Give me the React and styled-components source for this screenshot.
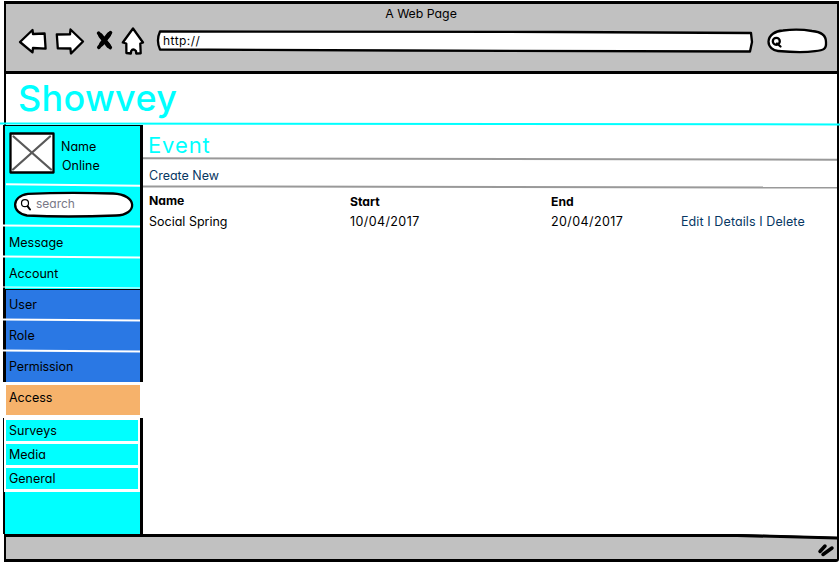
import React from "react";
import styled, { createGlobalStyle, css } from "styled-components";

const Global = createGlobalStyle`
  *, *::before, *::after { box-sizing: border-box; }
  body { margin: 0; background: #fff; overflow: hidden; }
`;

const Page = styled.div`
  width: 840px;
  height: 563px;
  padding: 1px 1px 0 4px;
  background: #fff;
  color: #000;
  font-family: Inter, "Liberation Sans", sans-serif;
  font-feature-settings: "cv11", "ss03";
  font-size: 12.5px;
  line-height: 16px;
  white-space: nowrap;
`;

const Window = styled.div`
  display: flex;
  flex-direction: column;
  width: 835px;
  height: 561px;
  border: solid #000;
  border-width: 3px 2px 3px 2px;
  border-bottom-right-radius: 3px;
`;

const Chrome = styled.header`
  height: 70px;
  flex: none;
  background: #c1c1c1;
  border-bottom: 3px solid #000;
`;

const Title = styled.div`
  height: 23px;
  padding-top: 2px;
  padding-right: 1px;
  text-align: center;
  font-size: 12.3px;
`;

const Toolbar = styled.div`
  display: flex;
  align-items: flex-start;
  height: 34px;
  padding-left: 10px;
`;

const Drawing = styled.svg`
  display: block;
  flex: none;
  overflow: visible;
  fill: #fff;
  stroke: #000;
  stroke-width: 2.3;
  stroke-linejoin: round;
  stroke-linecap: round;
`;

const Field = styled.div`
  position: relative;
  flex: none;
  display: flex;
  align-items: center;
  width: ${(p) => p.$w}px;
  height: ${(p) => p.$h}px;
  margin: ${(p) => p.$margin};
  > svg:first-child { position: absolute; inset: 0; }
`;

const FieldText = styled.span`
  position: relative;
  padding-left: ${(p) => p.$indent}px;
  padding-bottom: ${(p) => p.$lift || 0}px;
  color: ${(p) => p.$color || "#000"};
  font-size: 12px;
  letter-spacing: ${(p) => p.$ls || 0}px;
`;

const Brand = styled.h1`
  flex: none;
  height: 49px;
  margin: 0;
  padding-left: 12px;
  color: #00ffff;
  font-size: 36px;
  line-height: 48px;
  font-weight: 500;
  letter-spacing: 0.3px;
`;

const BrandRule = styled.div`
  position: relative;
  z-index: 1;
  flex: none;
  height: 2px;
  margin: 0 -3px 0 -6px;
  background: #00ffff;
  transform: skewY(0.06deg);
`;

const Body = styled.div`
  display: flex;
  flex: none;
  height: 409px;
  margin-left: -3px;
`;

const Sidebar = styled.aside`
  width: 140px;
  flex: none;
  display: flex;
  flex-direction: column;
`;

const edge = css`
  border: solid #000;
  border-width: 0 3px 0 2px;
`;

const Section = styled.div`
  ${edge}
  width: 140px;
  height: ${(p) => p.$h}px;
  flex: none;
  background: ${(p) => p.$bg || "#00ffff"};
  border-top-width: ${(p) => (p.$top ? 1 : 0)}px;
  border-left-width: ${(p) => p.$left || 2}px;
`;

const Profile = styled.div`
  display: flex;
  height: 58px;
  padding: 6px 0 0 4px;
`;

const ProfileText = styled.div`
  padding: 5px 0 0 6px;
  line-height: 19px;
  div + div { padding-left: 1px; }
`;

const Rule = styled.div`
  flex: none;
  height: ${(p) => p.$h || 2}px;
  margin-left: ${(p) => p.$bleed || 0}px;
  background: ${(p) => p.$color || "#fff"};
  transform: skewY(${(p) => p.$tilt || 0.5}deg);
`;

const Item = styled.div`
  height: 29px;
  padding: ${(p) => p.$drop || 8}px 0 0 ${(p) => p.$pad || 4}px;
  letter-spacing: ${(p) => p.$ls || 0}px;
`;

const Access = styled.div`
  width: 139px;
  height: 36px;
  flex: none;
  padding: 5px 0 0 3px;
  border: solid #fff;
  border-width: 3px 2px 3px 3px;
  background: #f6b26b;
  background-clip: padding-box;
`;

const SubMenu = styled.div`
  display: flex;
  flex-direction: column;
  gap: 3px;
  flex: none;
  width: 136px;
  height: 74px;
  padding: 2px 2px 3px 2px;
  margin-left: -1px;
  background: #fff;
`;

const SubItem = styled.div`
  flex: 1;
  padding: 2px 0 0 3px;
  line-height: 17px;
  background: #00ffff;
`;

const Main = styled.main`
  flex: 1;
  min-width: 0;
`;

const Heading = styled.h2`
  margin: 0;
  height: 33px;
  padding: 1px 0 0 5px;
  color: #00ffff;
  font-size: 22px;
  line-height: 38px;
  font-weight: 400;
  letter-spacing: 0.9px;
`;

const Create = styled.div`
  height: 26px;
  padding: 8px 0 0 6px;
  color: #073763;
`;

const Table = styled.div`
  display: grid;
  grid-template-columns: 201px 201px 130px 150px;
  grid-template-rows: 21px 20px;
  padding: 4px 0 0 6px;
  line-height: 19px;
`;

const Head = styled.div`
  font-weight: 700;
  font-size: 12.2px;
  padding-top: ${(p) => p.$drop || 0}px;
`;

const Cell = styled.div`
  color: ${(p) => (p.$link ? "#073763" : "#000")};
  letter-spacing: ${(p) => p.$ls || 0}px;
`;

const Footer = styled.footer`
  position: relative;
  display: flex;
  justify-content: flex-end;
  flex: 1;
  padding: 6px 3px 0 0;
  border-top: 3px solid #000;
  background: #c1c1c1;
  &::before, &::after {
    content: "";
    position: absolute;
    right: 0;
    top: -3px;
    width: 100px;
    height: 6px;
  }
  &::before {
    background: #fff;
    clip-path: polygon(0 0, 100% 0, 100% 3px);
  }
  &::after {
    background: #000;
    clip-path: polygon(0 0, 100% 2.4px, 100% 5.4px, 0 3px);
  }
`;

const Lens = () => (
  <Drawing width="13" height="14">
    <circle cx="5" cy="5.2" r="3.5" strokeWidth="1.2" />
    <path d="M7.5 8.2 10 11.5" strokeWidth="2" />
  </Drawing>
);

const menu = ["Message", "Account"];
const admin = [["User", 0], ["Role", 0], ["Permission", -0.1]];

export default function App() {
  return (
    <Page>
      <Global />
      <Window>
        <Chrome>
          <Title>A Web Page</Title>
          <Toolbar>
            <Drawing width="133" height="30" viewBox="16 22.5 133 30">
              <path d="M20 37.5 32.5 25.5 33 29.5 44.6 29 45.6 44.2 33 43.5 32.5 47.8Z" />
              <path d="M56.8 30 70 29.8 70.5 25 83 37 71 49 70.4 44 57.8 43.8Z" />
              <path d="M98.6 28.7 110.3 43M110.5 28.2 98.8 42.8" strokeWidth="3.6" />
              <path d="M100.5 31 108.6 41.2M109 30 101.5 39.5" strokeWidth="4.6" />
              <path d="M133 24 143 38 140.3 39 140.7 48.8 136.2 49 136 46.5Q133 43.5 131.2 46.5L130.8 49 126.4 48.5 126.3 39 122.8 38Z" />
            </Drawing>
            <Field $w={596} $h={22} $margin="3px 0 0 8px">
              <Drawing width="596" height="22" viewBox="157 30 596 22">
                <path d="M160 31.5C157.5 37 157.5 44 160 49.5L400 50.5 750 51.5 752 42 751 33 560 32Z" />
              </Drawing>
              <FieldText $indent={6} $lift={1} $ls={0.45}>http://</FieldText>
            </Field>
            <Field $w={60} $h={24} $margin="2px 0 0 14px">
              <Drawing width="60" height="24" viewBox="767 29 60 24">
                <path d="M783 30.5Q798 28.5 812 31C824 32 826 37 826 42C826.5 49 824 50.5 815 51.2Q801 53 778 51C773 50.5 768.5 47 768.5 41.5C769 35 775 31 783 30.5Z" />
                <circle cx="776.3" cy="41.3" r="3.5" />
                <path d="M777 43.5 780.5 46.5" />
              </Drawing>
            </Field>
          </Toolbar>
        </Chrome>
        <Brand>Showvey</Brand>
        <BrandRule />
        <Body>
          <Sidebar>
            <Section $h={164} $top>
              <Profile>
                <Drawing width="46" height="42">
                  <rect x="1.5" y="1.5" width="43" height="39" />
                  <path d="M4.5 4.5 42 37.5M41 4.5 4 37.5" stroke="#595959" />
                </Drawing>
                <ProfileText>
                  <div>Name</div>
                  <div>Online</div>
                </ProfileText>
              </Profile>
              <Rule $bleed={1} $tilt={0.6} />
              <Field $w={120} $h={25} $margin="6px 0 8px 9px">
                <Drawing width="120" height="25">
                  <path d="M14 1.8Q54 0 99 1.5C124 2.5 124 23 102 23.5Q52 25.5 13 23.5C-3 21-3 4 14 1.8Z" />
                </Drawing>
                <FieldText $indent={6}><Lens /></FieldText>
                <FieldText $indent={3} $lift={1} $color="#777785">search</FieldText>
              </Field>
              <Rule $bleed={-2} />
              {menu.map((m, i) => (
                <React.Fragment key={m}>
                  <Item>{m}</Item>
                  <Rule $bleed={-2} $h={i ? 1 : 2} />
                </React.Fragment>
              ))}
            </Section>
            <Section $h={93} $left={3} $bg="#2a78e4" $top>
              {admin.map(([m, ls], i) => (
                <React.Fragment key={m}>
                  <Item $pad={3} $drop={7} $ls={ls}>{m}</Item>
                  {i < 2 && <Rule $bleed={-3} />}
                </React.Fragment>
              ))}
            </Section>
            <Access>Access</Access>
            <Section $h={116}>
              <SubMenu>
                <SubItem>Surveys</SubItem>
                <SubItem>Media</SubItem>
                <SubItem>General</SubItem>
              </SubMenu>
            </Section>
          </Sidebar>
          <Main>
            <Heading>Event</Heading>
            <Rule $h={1.5} $color="#999" $tilt={0.12} />
            <Create>Create New</Create>
            <Rule $h={1.5} $color="#999" $tilt={0.1} />
            <Table>
              <Head>Name</Head>
              <Head $drop={1}>Start</Head>
              <Head $drop={1}>End</Head>
              <Head />
              <Cell>Social Spring</Cell>
              <Cell $ls={0.4}>10/04/2017</Cell>
              <Cell $ls={0.4}>20/04/2017</Cell>
              <Cell $link $ls={0.1}>Edit I Details I Delete</Cell>
            </Table>
          </Main>
        </Body>
        <Footer>
          <Drawing width="16" height="14">
            <path d="M2 8.5 7 3" strokeWidth="3.5" />
            <path d="M5 11.5 14 5" strokeWidth="3.5" />
          </Drawing>
        </Footer>
      </Window>
    </Page>
  );
}
